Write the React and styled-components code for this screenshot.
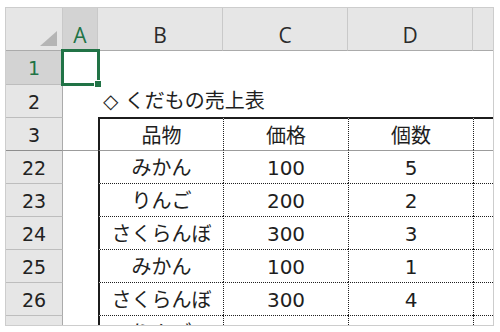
import React from 'react';
import styled, { createGlobalStyle } from 'styled-components';

const Global = createGlobalStyle`
  html, body { margin: 0; padding: 0; background: #fff; }
  body { font-family: "DejaVu Sans", "Noto Sans CJK JP", sans-serif; }
`;

const Page = styled.div`
  padding: 7px 0 0 5px;
`;

const Sheet = styled.div`
  display: grid;
  grid-template-columns: 57px 35px 125px 125px 125px 20px;
  grid-template-rows: 43px repeat(8, 33px) 10px;
  width: max-content;
  border: 1px solid #cdcdcd;
  background: #fff;
  overflow: hidden;
`;

const Corner = styled.div`
  box-sizing: border-box;
  background: #e6e6e6;
  border-right: 1px solid #c9c9c9;
  border-bottom: 1px solid #ababab;
  display: flex;
  align-items: flex-end;
  justify-content: flex-end;
  padding: 0 5px 4px 0;
`;

const ColHead = styled.div`
  box-sizing: border-box;
  background: ${p => (p.$selected ? '#d3d3d3' : '#e6e6e6')};
  color: ${p => (p.$selected ? '#217346' : '#2b2b2b')};
  border-right: ${p => (p.$last ? 'none' : '1px solid #c9c9c9')};
  border-bottom: 1px solid #ababab;
  display: flex;
  align-items: flex-end;
  justify-content: center;
  padding-bottom: 3px;
  font-family: "Open Sans", "DejaVu Sans", sans-serif;
  font-size: 21px;
  line-height: 24px;
`;

const RowHead = styled.div`
  box-sizing: border-box;
  background: ${p => (p.$selected ? '#d3d3d3' : '#e6e6e6')};
  color: ${p => (p.$selected ? '#217346' : '#222')};
  border-right: 1px solid #ababab;
  border-top: ${p =>
    p.$first ? 'none' : p.$freeze ? '1px solid #8e8e8e' : '1px solid #bdbdbd'};
  display: flex;
  justify-content: center;
  padding-top: 2px;
  font-size: 19px;
  line-height: 30px;
  overflow: hidden;
`;

const borderFor = kind => {
  switch (kind) {
    case 'solid':
      return '2px solid #1c1c1c';
    case 'dotted':
      return '1px dotted #1f1f1f';
    case 'freeze':
      return '1px solid #9c9c9c';
    default:
      return 'none';
  }
};

const Cell = styled.div`
  box-sizing: border-box;
  position: relative;
  display: flex;
  justify-content: ${p => (p.$align === 'left' ? 'flex-start' : 'center')};
  padding-left: ${p => (p.$align === 'left' ? '5px' : '0')};
  padding-top: 2px;
  font-size: 20px;
  line-height: 30px;
  color: #1e1e1e;
  white-space: nowrap;
  min-width: 0;
  border-left: ${p => borderFor(p.$left)};
  border-top: ${p => borderFor(p.$top)};
  overflow: ${p => (p.$clip ? 'hidden' : 'visible')};
`;

const Selection = styled.div`
  position: absolute;
  left: -2px;
  top: -2px;
  right: -2px;
  bottom: -2px;
  border: 3px solid #217346;
  pointer-events: none;
  z-index: 2;
`;

const Handle = styled.div`
  position: absolute;
  right: -5px;
  bottom: -5px;
  width: 6px;
  height: 6px;
  background: #217346;
  border: 1px solid #fff;
`;

const CornerMark = () => (
  <svg width="17" height="15" viewBox="0 0 17 15">
    <polygon points="17,0 17,15 0,15" fill="#b5b5b5" />
  </svg>
);

const columns = ['A', 'B', 'C', 'D', ''];

const rows = [
  { n: '1', kind: 'select' },
  { n: '2', kind: 'title', text: '◇ くだもの売上表' },
  { n: '3', kind: 'head', values: ['品物', '価格', '個数', ''] },
  { n: '22', kind: 'data', top: 'freeze', values: ['みかん', '100', '5', ''] },
  { n: '23', kind: 'data', values: ['りんご', '200', '2', ''] },
  { n: '24', kind: 'data', values: ['さくらんぼ', '300', '3', ''] },
  { n: '25', kind: 'data', values: ['みかん', '100', '1', ''] },
  { n: '26', kind: 'data', values: ['さくらんぼ', '300', '4', ''] },
  { n: '27', kind: 'data', clip: true, values: ['りんご', '200', '2', ''] },
];

export default function App() {
  return (
    <Page>
      <Global />
      <Sheet>
        <Corner>
          <CornerMark />
        </Corner>
        {columns.map((c, i) => (
          <ColHead key={i} $selected={c === 'A'} $last={i === columns.length - 1}>
            {c}
          </ColHead>
        ))}
        {rows.map((r, ri) => {
          const freeze = r.top === 'freeze';
          const head = (
            <RowHead
              key={`h${ri}`}
              $first={ri === 0}
              $freeze={freeze}
              $selected={r.kind === 'select'}
            >
              {r.n}
            </RowHead>
          );
          const aCell = (
            <Cell key={`a${ri}`} $top={freeze ? 'freeze' : 'none'} $clip={r.clip}>
              {r.kind === 'select' && (
                <Selection>
                  <Handle />
                </Selection>
              )}
            </Cell>
          );
          let rest;
          if (r.kind === 'select') {
            rest = [0, 1, 2, 3].map(i => <Cell key={`c${ri}${i}`} />);
          } else if (r.kind === 'title') {
            rest = [
              <Cell key={`c${ri}0`} $align="left">
                {r.text}
              </Cell>,
              ...[1, 2, 3].map(i => <Cell key={`c${ri}${i}`} />),
            ];
          } else {
            const top = r.kind === 'head' ? 'solid' : freeze ? 'freeze' : 'dotted';
            rest = r.values.map((v, i) => (
              <Cell
                key={`c${ri}${i}`}
                $top={top}
                $left={i === 0 ? 'solid' : 'dotted'}
                $clip={r.clip}
              >
                {v}
              </Cell>
            ));
          }
          return [head, aCell, ...rest];
        })}
      </Sheet>
    </Page>
  );
}
